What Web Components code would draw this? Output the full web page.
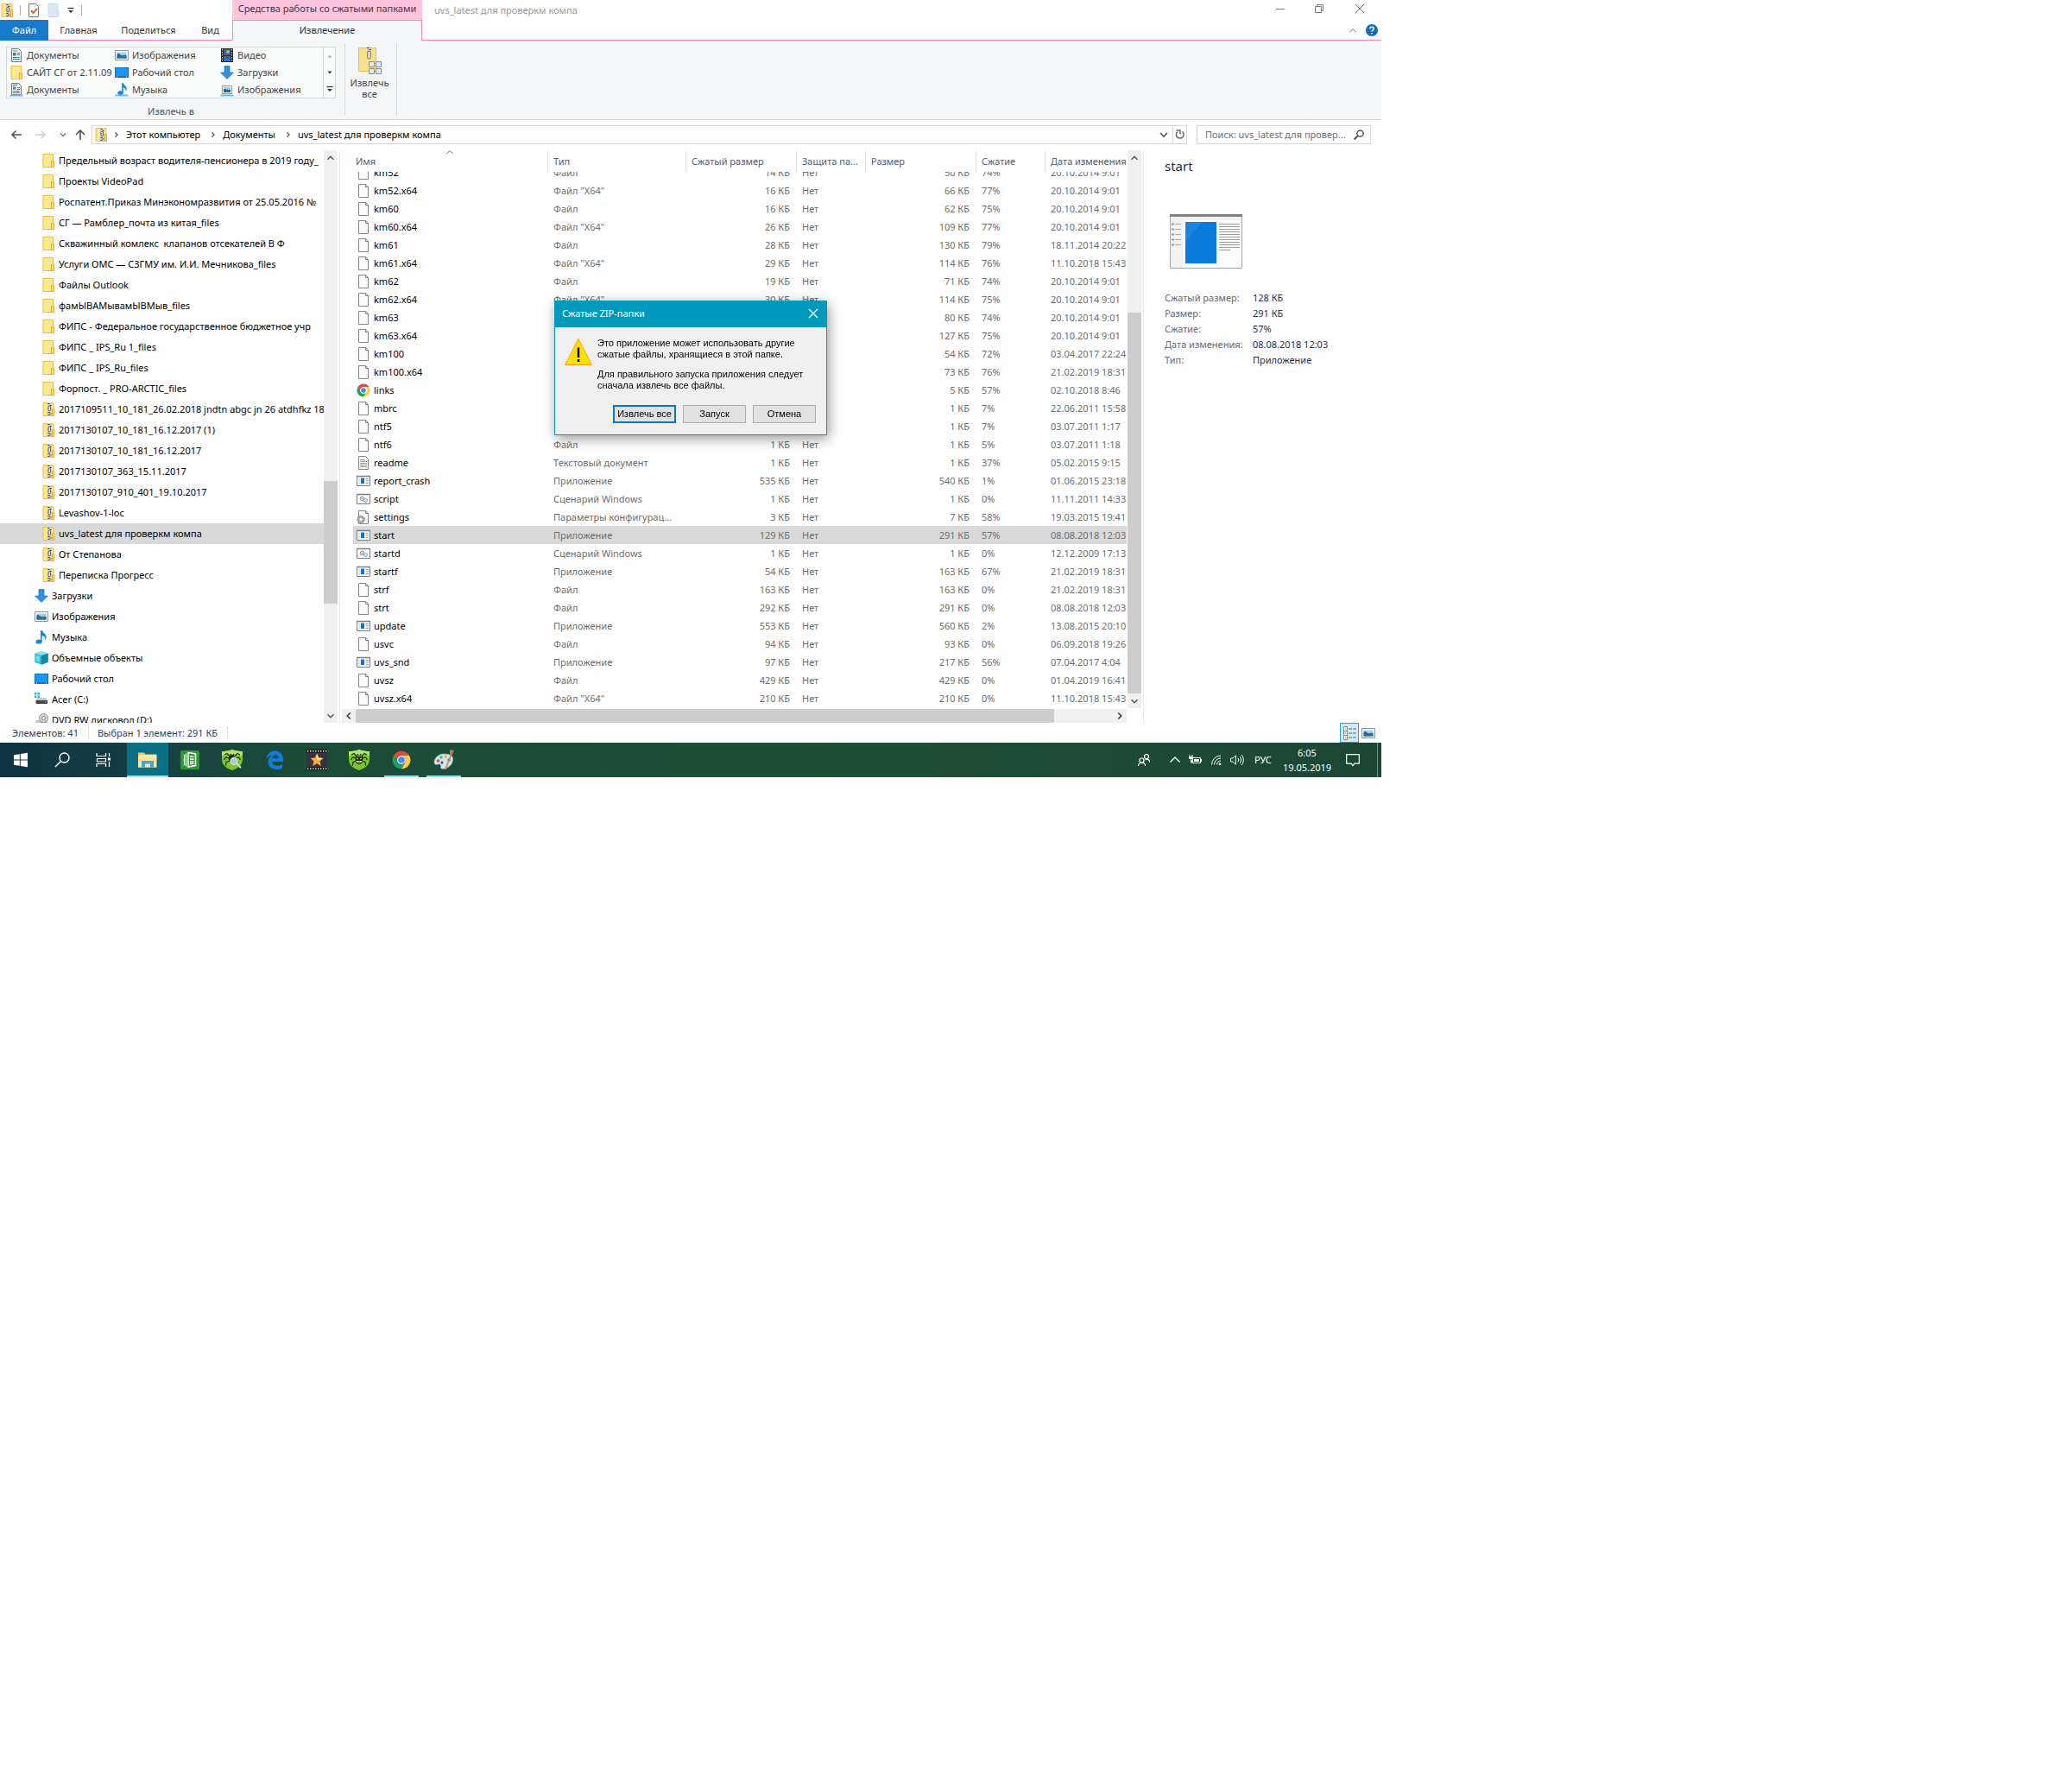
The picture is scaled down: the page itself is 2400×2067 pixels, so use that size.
<!DOCTYPE html>
<html lang="ru">
<head>
<meta charset="utf-8">
<title>uvs_latest для проверкм компа</title>
<style>
  body { margin: 0; background: #fff; display: grid; grid-template-columns: 2fr 1fr; align-items: start;
    font: 11px/16px "Noto Sans", "Open Sans", sans-serif; color: #000; }
</style>
</head>
<body>
<desk-top></desk-top>
<script>
const ICONS = {
  folder: ['0 0 16 16', '<path d="M2 .5h11.500v15H2z" fill="#ffe68f" stroke="#e9c04c"/><path d="M11.500 8.500h3v7h-3z" fill="#ffd75e" stroke="#e0b23a"/>'],
  zip: ['0 0 16 16', '<path d="M2 .5h12v15H2z" fill="#ffe68f" stroke="#e9c04c"/><path d="M12.500 7.500h2v8h-2z" fill="#ffd75e" stroke="#e0b23a"/><path d="M7 0h4.500v16H7z" fill="#c9c9c9"/><path d="M7.500 1.500h2m0 2h2m-4 8h2m0 1.500h2m-4 1.500h2" stroke="#444" stroke-width="1.200"/><rect x="8" y="4.500" width="2.500" height="5" rx="1" fill="#eee" stroke="#555"/>'],
  file: ['0 0 16 16', '<path d="M2.500.5h8l3 3v12h-11z" fill="#fbfbfb" stroke="#858585"/><path d="M10.500.5v3h3" fill="none" stroke="#858585"/>'],
  text: ['0 0 16 16', '<path d="M2.500.5h8l3 3v12h-11z" fill="#fdfdfd" stroke="#858585"/><path d="M4 4.500h6M4 6.500h8M4 8.500h8M4 10.500h8M4 12.500h8" stroke="#999"/>'],
  chrome: ['0 0 16 16', '<path d="M1.500 4.250A7.500 7.500 0 0 1 14.500 4.250H8A3.750 3.750 0 0 0 4.750 9.900z" fill="#dd4b3e"/><path d="M14.500 4.250A7.500 7.500 0 0 1 8 15.500l3.250-5.600A3.750 3.750 0 0 0 8 4.250z" fill="#ffcd42"/><path d="M8 15.500A7.500 7.500 0 0 1 1.500 4.250l3.250 5.650a3.750 3.750 0 0 0 6.500 0z" fill="#1aa15f"/><circle cx="8" cy="8" r="3.600" fill="#fff"/><circle cx="8" cy="8" r="2.800" fill="#4587f3"/>'],
  exe: ['0 0 16 16', '<path d="M.5 2.500h15v11H.5z" fill="#fff" stroke="#7b7f83"/><path d="M0 2.500h16" stroke="#7b7f83" stroke-width="1.500"/><path d="M2 4h2v8H2z" fill="#e4e4e4"/><path d="M5 4.500h4v6.500H5z" fill="#0a74d8"/><path d="M10.500 5.500H14m-3.500 2.500H14m-3.500 2.500H14" stroke="#999"/>'],
  script: ['0 0 16 16', '<path d="M.5 2.500h15v11H.5z" fill="#fff" stroke="#7b7f83"/><path d="M0 2.500h16" stroke="#7b7f83" stroke-width="1.500"/><circle cx="6.500" cy="7.500" r="2.300" fill="#eee" stroke="#888"/><circle cx="6.500" cy="7.500" r=".8" fill="#888"/><circle cx="10.500" cy="9.500" r="2" fill="#dceeff" stroke="#7aa6c8"/>'],
  settings: ['0 0 16 16', '<path d="M2.500.5h8l3 3v12h-11z" fill="#fbfbfb" stroke="#858585"/><path d="M10.500.5v3h3" fill="none" stroke="#858585"/><circle cx="5" cy="10.500" r="4" fill="#bbb" stroke="#888" stroke-width="1.500" stroke-dasharray="1.600 1.200"/><circle cx="5" cy="10.500" r="3" fill="#c8c8c8" stroke="#777" stroke-width=".6"/><circle cx="5" cy="10.500" r="1.200" fill="#fff"/>'],
  download: ['0 0 16 16', '<path d="M5 .5h6V8h4.500L8 15.500.5 8H5z" fill="#3390df" stroke="#1f76c2" stroke-width=".7"/>'],
  picture: ['0 0 16 16', '<path d="M.5 2.500h15v11H.5z" fill="#fff" stroke="#8d9694"/><path d="M2.500 4.500h11v7h-11z" fill="#9cd0f5"/><path d="M2.500 6.500c2-1 3 0 4.500 1.500 2 .5 4-.5 6.500 0v3.500h-11z" fill="#2f6682"/><path d="M2.500 10c4-1 7-1 11 0v1.500h-11z" fill="#1d79bd"/>'],
  pictureLib: ['0 0 16 16', '<path d="M2.500 3.500h11v9h-11z" fill="#fff" stroke="#8d9694"/><path d="M4 5h8v6H4z" fill="#9cd0f5"/><path d="M4 7.500c3-1.500 4 1 8 .5v3H4z" fill="#2f6682"/><path d="M1 13.500h14l1 2H0z" fill="#6db8ea"/>'],
  music: ['0 0 16 16', '<ellipse cx="5" cy="13" rx="3.600" ry="2.600" fill="#1487e0"/><path d="M7 0h2c.5 3 4.500 3.500 4.500 7.500 0 1.500-.5 2.500-1.500 3.500.5-3-1-4.500-3.400-5V13H7z" fill="#1487e0"/>'],
  musicLib: ['0 0 16 16', '<path d="M1 13.500h14l1 2H0z" fill="#6db8ea"/><ellipse cx="6.500" cy="11.500" rx="3.200" ry="2.300" fill="#1487e0"/><path d="M8.200 0h1.600c.5 3 4 3.500 4 7 0 1-.4 2-1.200 2.700.3-2.500-.8-3.700-2.800-4.200v6H8.200z" fill="#1487e0"/>'],
  cube: ['0 0 16 16', '<path d="M8 .3l7.700 2.400v10L8 15.700.3 12.700v-10z" fill="#2fb4cc"/><path d="M8 .3l7.700 2.400L8 5 .3 2.700z" fill="#8be3ef"/><path d="M8 5v10.700l7.700-3v-10z" fill="#1487a5"/><path d="M1.500 4.500L6 6v7l-4.500-1.500z" fill="#74d5e4"/>'],
  desktop: ['0 0 16 16', '<path d="M0 2h16v12H0z" fill="#0d6fc9"/><path d="M1 3h14v9H1z" fill="#1796f2"/><path d="M2 13h1m10 0h1" stroke="#fff"/>'],
  drive: ['0 0 16 16', '<path d="M0 0h2.500v2.500H0zM3.500 0H6v2.500H3.500zM0 3.500h2.500V6H0zM3.500 3.500H6V6H3.500z" fill="#23b2e8"/><path d="M3 6h10l2 3H1.500z" fill="#c5c9cb"/><path d="M1.500 9H15v4H1.500z" fill="#45494c"/><path d="M12 11h1.500" stroke="#59e04f"/>'],
  dvd: ['0 0 16 16', '<path d="M2 8h12l1.500 4H.5z" fill="#bfc3c5"/><circle cx="10.500" cy="5.500" r="5" fill="#d8d8d8" stroke="#8c8c8c"/><circle cx="10.500" cy="5.500" r="2" fill="#fff" stroke="#777"/><path d="M.5 12h15v3H.5z" fill="#777"/>'],
  docs: ['0 0 16 16', '<path d="M2.500.5h8l3 3v12h-11z" fill="#fff" stroke="#777"/><path d="M4 5h3.500v3.500H4z" fill="#2f7fc4"/><path d="M4 3h5M9 5.500h3M9 7.500h3M4 10.500h8M4 12.500h8" stroke="#2f7fc4"/>'],
  docsLib: ['0 0 16 16', '<path d="M2.500.5h8l3 3v10h-11z" fill="#fff" stroke="#777"/><path d="M4 4.500h3.500v3H4z" fill="#2f7fc4"/><path d="M4 2.500h5M9 5.500h3M9 7.500h3M4 9.500h8M4 11.500h8" stroke="#2f7fc4"/><path d="M1 13.500h14l1 2H0z" fill="#6db8ea"/>'],
  video: ['0 0 16 16', '<path d="M1 0h14v16H1z" fill="#222"/><path d="M4 1h8v7H4z" fill="#2465b5"/><path d="M4 9h8v6H4z" fill="#2f73c9"/><circle cx="9" cy="4" r="2" fill="#e0a92d"/><path d="M5 13l3-3 3 3" stroke="#2b3f55" fill="none"/><path d="M2.500 1v15M13.500 1v15" stroke="#eee" stroke-dasharray="1.500 1.500"/>'],
  check: ['0 0 16 16', '<path d="M2.500.5h8l3 3v12h-11z" fill="#fff" stroke="#777"/><path d="M5 8l2.500 3L12 6" fill="none" stroke="#e8622b" stroke-width="2"/>'],
  ghost: ['0 0 16 16', '<path d="M2 .5h11v15H2z" fill="#dce8f5" stroke="#ccd9ea"/><path d="M11.500 8.500h3v7h-3z" fill="#d2e2f4"/>'],
  extract: ['0 0 30 32', '<path d="M2.500 1.500h20v27h-20z" fill="#fbe08b" stroke="#e5bd52"/><path d="M12 0h5v15h-5z" fill="#ccc"/><path d="M12 1.500h2.500m0 2H17" stroke="#555"/><rect x="12.800" y="5" width="3.400" height="9" rx="1.700" fill="#eee" stroke="#666"/><g fill="#d5ecfa" stroke="#4b9fd5"><path d="M14.500 17.500h6v6h-6zM22.500 17.500h6v6h-6zM14.500 25.500h6v6h-6zM22.500 25.500h6v6h-6z"/></g>'],
  back: ['0 0 16 16', '<path d="M14 8H3m4.500-4.500L3 8l4.500 4.500" fill="none" stroke="#555" stroke-width="1.600"/>'],
  forward: ['0 0 16 16', '<path d="M2 8h11M8.500 3.500L13 8l-4.500 4.500" fill="none" stroke="#ccc" stroke-width="1.400"/>'],
  up: ['0 0 16 16', '<path d="M8 14V3M3 8l5-5 5 5" fill="none" stroke="#555" stroke-width="1.700"/>'],
  chevDown: ['0 0 16 16', '<path d="M4 6l4 4 4-4" fill="none" stroke="#555" stroke-width="1.700"/>'],
  chevUp: ['0 0 16 16', '<path d="M4 10l4-4 4 4" fill="none" stroke="#555" stroke-width="1.700"/>'],
  chevLeft: ['0 0 16 16', '<path d="M10 4L6 8l4 4" fill="none" stroke="#444" stroke-width="2"/>'],
  chevRight: ['0 0 16 16', '<path d="M6 4l4 4-4 4" fill="none" stroke="#444" stroke-width="2"/>'],
  thinUp: ['0 0 16 16', '<path d="M4.500 10L8 6.500l3.500 3.500" fill="none" stroke="#666"/>'],
  crumb: ['0 0 16 16', '<path d="M6.500 5.500L9 8l-2.500 2.500" fill="none" stroke="#555" stroke-width="1.300"/>'],
  refresh: ['0 0 16 16', '<path d="M6 4.500a4.300 4.300 0 1 0 5.500 0" fill="none" stroke="#666" stroke-width="1.500"/><path d="M4.500 3H9v4.500" fill="none" stroke="#666" stroke-width="1.500"/>'],
  search: ['0 0 16 16', '<circle cx="9.500" cy="6.500" r="3.600" fill="none" stroke="#555" stroke-width="1.500"/><path d="M7 9l-4.500 4.500" stroke="#555" stroke-width="2"/>'],
  min: ['0 0 16 16', '<path d="M3 8.500h10" stroke="#777"/>'],
  restore: ['0 0 16 16', '<path d="M3.500 5.500h7v7h-7zM5.500 5.500v-2h7v7h-2" fill="none" stroke="#777"/>'],
  close: ['0 0 16 16', '<path d="M3 3l10 10M13 3L3 13" stroke="#777"/>'],
  closeWhite: ['0 0 16 16', '<path d="M3 3l10 10M13 3L3 13" stroke="#fff" stroke-width="1.200"/>'],
  help: ['0 0 16 16', '<circle cx="8" cy="8" r="7" fill="#0f6cbf"/><path d="M5.800 6.300C5.800 3.500 10.300 3.500 10.300 6.200 10.300 8 8 7.800 8 9.700M8 11v1.500" fill="none" stroke="#fff" stroke-width="1.500"/>'],
  triDown: ['0 0 16 16', '<path d="M5.500 6.500h5L8 9.500z" fill="#333"/>'],
  triUp: ['0 0 16 16', '<path d="M5.500 9.500h5L8 6.500z" fill="#aaa"/>'],
  triBar: ['0 0 16 16', '<path d="M4.500 5.500h7" stroke="#333" stroke-width="1.300"/><path d="M5 8h6l-3 3z" fill="#333"/>'],
  warning: ['0 0 32 32', '<path d="M16 1L31.500 31.500H.5z" fill="#ffdf00" stroke="#f2a52a"/><path d="M16 11.500V23M16 25v3" stroke="#000" stroke-width="2.400"/>'],
  details: ['0 0 16 16', '<path d="M1.500.5h4v15h-4zM1.500 5.500h4M1.500 10.500h4" fill="#fff" stroke="#888"/><path d="M3 3h1" stroke="#2a9"/><path d="M3 8h1" stroke="#27f"/><path d="M3 13h1" stroke="#d22"/><path d="M7 3h4m1 0h4M7 8h4m1 0h4M7 13h4m1 0h4" stroke="#666"/>'],
  preview: ['0 0 84 63', '<path d="M.5.500h83v62H.5z" fill="#fdfdfd" stroke="#a5a8a6"/><path d="M0 0h84v3H0z" fill="#7c827e"/><path d="M1 3h82v4H1z" fill="#f0f0f0"/><path d="M1 7h14v55H1z" fill="#f1f1f1"/><path d="M18 9h36v48H18z" fill="#0a7adb"/><path d="M18 9h20L18 32z" fill="#1c83df"/><path d="M57 11.500h24M57 14.500h24M57 17.500h24M57 20.500h24M57 23.500h24M57 26.500h24M57 29.500h24M57 32.500h24M57 35.500h24M57 38.500h24M57 41.500h13" stroke="#999"/><path d="M6 11.500h7M6 17.500h7M6 23.500h7M6 29.500h7M6 35.500h7" stroke="#aaa"/><path d="M2 11.500h3M2 17.500h3M2 23.500h3M2 29.500h3M2 35.500h3" stroke="#999" stroke-width="2"/>'],
  win: ['0 0 24 24', '<path d="M4 6.200l6.800-1v6.300H4zM11.800 5L20 3.800v7.700h-8.200zM4 12.500h6.800v6.300L4 17.800zM11.800 12.500H20v7.700L11.800 19z" fill="#fff"/>'],
  tbSearch: ['0 0 24 24', '<circle cx="14.500" cy="9.500" r="5.500" fill="none" stroke="#fff" stroke-width="1.400"/><path d="M10.500 13.500L4 20" stroke="#fff" stroke-width="1.400"/>'],
  taskview: ['0 0 24 24', '<path d="M4 4v3.500h10.500V4M4 20v-3.500h10.500V20M4.500 10.500h10v3.500h-10z" fill="none" stroke="#fff" stroke-width="1.200"/><path d="M18.500 4v4m0 6v6" stroke="#fff" stroke-width="1.200"/><path d="M17 9.500h3v3h-3z" fill="#fff"/>'],
  explorer: ['0 0 24 24', '<path d="M1 3.500h7l1.500 2H22v15H1z" fill="#f3c65a"/><path d="M2 6h20.500v14.500H1V9z" fill="#ffe6a0"/><path d="M5 20.500V13h14v7.500h-4v-4H9v4z" fill="#3aa7e0"/>'],
  evernote: ['0 0 24 24', '<rect x="1" y="1" width="22" height="22" rx="2" fill="#2f9634"/><path d="M10 3.500L18.500 5v13.500L10 20z" fill="none" stroke="#fff" stroke-width="1.500"/><path d="M7.500 4.500v15M5.500 6v12" stroke="#fff" stroke-width="1.300"/><path d="M12 8l4.500.5M12 11l4.500.2M12 14h4.500M12 16.500l4.500-.3" stroke="#fff" stroke-width="1.400"/>'],
  drweb: ['0 0 24 24', '<path d="M0 2c4 0 8-.5 12-2 4 1.500 8 2 12 2v9c0 7-5 10.500-12 13C5 21.500 0 18 0 11z" fill="#7cc62d"/><path d="M0 2c4 0 8-.5 12-2 4 1.500 8 2 12 2v5C16 5 8 5 0 7z" fill="#b5e567"/><path d="M9 7.500L6 4.500 3 6m6 4L4.500 9 2.500 12m6.500 1l-4 1.500-.5 4M15 7.500l3-3L21 6m-6 4l4.500-1 2 3M15 13l4 1.500.5 4M10 5l1 2m3-2l-1 2" fill="none" stroke="#1c2a12" stroke-width="1.200"/><path d="M8 7c2 1.500 6 1.500 8 0 .8 2 .8 7-1 9-1.500 1.500-4.500 1.500-6 0-1.800-2-1.800-7-1-9z" fill="#1c2a12"/><path d="M9 10l2 1m4-1l-2 1m-4 2.500c1.500 2.500 4.500 2.500 6 0z" stroke="#b5e567" stroke-width="1.200" fill="none"/>'],
  drwebScan: ['0 0 24 24', '<path d="M0 2c4 0 8-.5 12-2 4 1.500 8 2 12 2v9c0 7-5 10.500-12 13C5 21.500 0 18 0 11z" fill="#7cc62d"/><path d="M0 2c4 0 8-.5 12-2 4 1.500 8 2 12 2v5C16 5 8 5 0 7z" fill="#b5e567"/><path d="M9 7.500L6 4.500 3 6m6 4L4.500 9 2.500 12m6.500 1l-4 1.500-.5 4M15 7.500l3-3L21 6m-6 4l4.500-1 2 3M10 5l1 2m3-2l-1 2" fill="none" stroke="#1c2a12" stroke-width="1.200"/><ellipse cx="11.500" cy="10.500" rx="3.800" ry="4.500" fill="#1c2a12"/><path d="M17 16l5 5" stroke="#ddd" stroke-width="2"/><circle cx="14" cy="13.500" r="4" fill="#a9cbd9" stroke="#ddd" stroke-width="1.300"/>'],
  edge: ['0 0 24 24', '<path d="M2 11C3.500 4.500 8 1.500 12.500 1.500 18.500 1.500 22 6 22 11.500V14H9c.3 3.300 3.300 4.800 6.300 4.800 2.200 0 4.200-.6 5.700-1.500v4.200c-2 1-4.300 1.500-6.500 1.500C8 23 4.500 19 4.500 14.500c0-3.200 1.700-5.900 4.500-7.500C5.800 7.300 3.400 8.700 2 11zM9.200 10.200h7.300c0-2.500-1.300-3.900-3.500-3.900S9.500 7.800 9.200 10.200z" fill="#0f7ddb"/>'],
  star: ['0 0 24 24', '<path d="M0 0h24v24H0z" fill="#111"/><path d="M0 3.500h24v17H0z" fill="#343443"/><path d="M1 1.700h23M1 22.300h23" stroke="#eee" stroke-width="1.400" stroke-dasharray="1.500 1.500"/><path d="M12 4.500l2.200 5 5.300.5-4 3.600 1.200 5.300-4.700-2.800-4.700 2.800 1.200-5.300-4-3.600 5.300-.5z" fill="#ffad3a"/><path d="M12 4.500l2.200 5 5.300.5-7.500 3z" fill="#ffe1a1"/>'],
  paint: ['0 0 24 24', '<path d="M13 5C6 4.500 1 10 1 14.500c0 3 2.500 3.500 4.500 2.500s3.500.5 3 3 2 3 5 2c6-2 9-6 9-11S18 5.300 13 5z" fill="#cfe6f2" stroke="#89adc0" stroke-width=".6"/><circle cx="5.500" cy="13" r="1.800" fill="#de4c3b"/><circle cx="9" cy="9" r="1.800" fill="#52b84a"/><circle cx="14" cy="8" r="1.800" fill="#f2b632"/><circle cx="18" cy="12" r="1.800" fill="#366fc6"/><circle cx="10" cy="15" r="1.500" fill="#24506b"/><path d="M21.500 3L14 23" stroke="#d28a3c" stroke-width="1.800"/><path d="M19 0l5 1-2 5-3-1z" fill="#b87945"/>'],
  people: ['0 0 16 16', '<circle cx="11" cy="4" r="2.500" fill="none" stroke="#fff" stroke-width="1.200"/><circle cx="5.500" cy="8.500" r="2.500" fill="none" stroke="#fff" stroke-width="1.200"/><path d="M1.500 15c0-5 8-5 8 0M9.500 8c2.500-2 5-.5 5 2.500" fill="none" stroke="#fff" stroke-width="1.200"/>'],
  trayUp: ['0 0 16 16', '<path d="M2.500 10.500L8 5l5.500 5.500" fill="none" stroke="#fff" stroke-width="1.300"/>'],
  battery: ['0 0 16 16', '<path d="M4.500 5.500h9v6h-9zM14.500 7v3" fill="none" stroke="#fff"/><path d="M6 7h6v3H6z" fill="#fff"/><path d="M1 2v2m3-2v2M.5 4.500h4v2h-4zM2.500 6v5h2" fill="#fff" stroke="#fff"/>'],
  wifi: ['0 0 16 16', '<path d="M2.500 13.500a10.500 10.500 0 0 1 10.500-10.500M5.500 13.500a7.500 7.500 0 0 1 7.500-7.500M8.500 13.500a4.500 4.500 0 0 1 4.500-4.500" fill="none" stroke="#fff"/><circle cx="12" cy="12.700" r="1.300" fill="#fff"/>'],
  speaker: ['0 0 16 16', '<path d="M.5 6h2.500l3.500-3v10L3 10H.5z" fill="none" stroke="#fff"/><path d="M9 6c1 1 1 3 0 4m2-6c2 2 2 6 0 8m2-10c3 3 3 9 0 12" fill="none" stroke="#fff"/>'],
  notify: ['0 0 16 16', '<path d="M.7 1.700h14.600v10.500H10L8 14.500l-2-2.300H.7z" fill="none" stroke="#fff" stroke-width="1.200"/>']
};

const BASE = `
  *, *::before { box-sizing: border-box; }
  button, input { font: inherit; color: inherit; background: none; border: 0; padding: 0; margin: 0; }
  button { display: flex; align-items: center; justify-content: center; white-space: nowrap; }
  a { color: inherit; text-decoration: none; }
`;

class Part extends HTMLElement {
  connectedCallback() {
    if (this.shadowRoot) return;
    const t = document.createElement('template');
    t.innerHTML = `<style>${BASE}${this.styles()}</style>${this.markup()}`;
    this.attachShadow({ mode: 'open' }).append(t.content.cloneNode(true));
    this.ready();
  }
  styles() { return ''; }
  markup() { return '<slot></slot>'; }
  ready() {}
}

customElements.define('ui-icon', class extends Part {
  styles() { return `:host { display: block; width: 16px; height: 16px; flex: none; } svg { display: block; width: 100%; height: 100%; }`; }
  markup() {
    const [box, body] = ICONS[this.getAttribute('name')];
    return `<svg viewBox="${box}" aria-hidden="true">${body}</svg>`;
  }
});

customElements.define('scroll-bar', class extends Part {
  styles() { return `
    :host { display: flex; flex-direction: column; background: #f0f0f0; width: 16px; }
    :host([horizontal]) { flex-direction: row; width: auto; height: 16px; }
    button { width: 16px; height: 17px; flex: none; }
    :host([horizontal]) button { width: 16px; height: 16px; }
    .thumb { background: #cdcdcd; }
    ui-icon { width: 14px; height: 14px; }`; }
  markup() {
    const h = this.hasAttribute('horizontal');
    const [a, b, c] = this.getAttribute('parts').split(' ');
    return `<button aria-label="Назад"><ui-icon name="${h ? 'chevLeft' : 'chevUp'}"></ui-icon></button>
      <div style="flex:${a}"></div><div class="thumb" style="flex:${b}"></div><div style="flex:${c}"></div>
      <button aria-label="Вперед"><ui-icon name="${h ? 'chevRight' : 'chevDown'}"></ui-icon></button>`;
  }
});

customElements.define('title-bar', class extends Part {
  styles() { return `
    :host { display: flex; height: 23px; background: #fff; }
    .quick { width: 269px; display: flex; align-items: center; gap: 7px; }
    .quick button:nth-last-child(2) { width: 10px; }
    .sep { width: 1px; height: 12px; background: #aaa; }
    .group { width: 220px; background: #ffc4dd; color: #4a3340; text-align: center; line-height: 20px; white-space: nowrap; }
    .title { flex: 1; padding-left: 14px; color: #999; line-height: 23px; }
    .win { display: flex; }
    .win button { width: 45px; height: 20px; }
    .win button:last-child { width: 50px; }`; }
  markup() { return `
    <div class="quick"><ui-icon name="zip"></ui-icon><span class="sep"></span>
      <button aria-label="Свойства"><ui-icon name="check"></ui-icon></button>
      <button aria-label="Новая папка"><ui-icon name="ghost"></ui-icon></button>
      <button aria-label="Настройка панели"><ui-icon name="triBar"></ui-icon></button><span class="sep"></span>
    </div>
    <div class="group">Средства работы со сжатыми папками</div>
    <div class="title">uvs_latest для проверкм компа</div>
    <div class="win"><button aria-label="Свернуть"><ui-icon name="min"></ui-icon></button>
      <button aria-label="Восстановить"><ui-icon name="restore"></ui-icon></button>
      <button aria-label="Закрыть"><ui-icon name="close"></ui-icon></button></div>`; }
});

customElements.define('tab-strip', class extends Part {
  styles() { return `
    :host { display: flex; height: 24px; color: #333; }
    button, .rest { border-bottom: 1px solid #ff80b4; }
    .file { width: 56px; background: #1979ca; color: #fff; border-color: #1979ca; }
    .home { width: 70px; } .share { width: 92px; } .view { width: 51px; }
    .ctx { width: 220px; background: #f5f6f7; border: 1px solid #ff80b4; border-bottom-color: #f5f6f7; }
    .rest { flex: 1; display: flex; align-items: center; justify-content: flex-end; gap: 6px; padding-right: 3px; }
    .rest button { border: 0; }`; }
  markup() { return `
    <button class="file">Файл</button><button class="home">Главная</button><button class="share">Поделиться</button>
    <button class="view">Вид</button><button class="ctx">Извлечение</button>
    <div class="rest"><button aria-label="Свернуть ленту"><ui-icon name="thinUp"></ui-icon></button>
    <button aria-label="Справка"><ui-icon name="help"></ui-icon></button></div>`; }
});

customElements.define('rib-bon', class extends Part {
  styles() { return `
    :host { display: flex; height: 92px; background: #f5f6f7; border-bottom: 1px solid #d5d8d6; color: #444; padding: 3px 0 4px; }
    .group { width: 400px; border-right: 1px solid #d9dbdc; padding: 4px 10px 0 7px; display: flex; flex-direction: column; gap: 7px; }
    .gallery { display: flex; border: 1px solid #d3d7d5; background: #fafbfb; height: 60px; }
    .items { flex: 1; display: grid; grid-template-columns: 122px 122px 1fr; grid-template-rows: repeat(3, 20px); align-content: center; padding-left: 3px; }
    .items button { justify-content: flex-start; gap: 4px; }
    .arrows { width: 14px; border-left: 1px solid #d3d7d5; display: grid; }
    .arrows button { overflow: hidden; }
    .label { text-align: center; color: #555; }
    .all { width: 60px; border-right: 1px solid #d9dbdc; }
    .all button { flex-direction: column; width: 56px; line-height: 13px; white-space: normal; padding-top: 4px; gap: 3px; }
    .all ui-icon { width: 30px; height: 32px; }`; }
  markup() {
    const items = [['docs', 'Документы'], ['picture', 'Изображения'], ['video', 'Видео'], ['folder', 'САЙТ СГ от 2.11.09'], ['desktop', 'Рабочий стол'], ['download', 'Загрузки'], ['docsLib', 'Документы'], ['musicLib', 'Музыка'], ['pictureLib', 'Изображения']];
    return `<div class="group"><div class="gallery"><div class="items">${items.map(([i, t]) => `<button><ui-icon name="${i}"></ui-icon>${t}</button>`).join('')}</div>
      <div class="arrows"><button aria-label="Вверх"><ui-icon name="triUp"></ui-icon></button><button aria-label="Вниз"><ui-icon name="triDown"></ui-icon></button><button aria-label="Еще"><ui-icon name="triBar"></ui-icon></button></div></div>
      <div class="label">Извлечь в</div></div>
      <div class="all"><button><ui-icon name="extract"></ui-icon><span>Извлечь<br>все</span></button></div>`;
  }
});

customElements.define('address-bar', class extends Part {
  styles() { return `
    :host { box-sizing: border-box; display: flex; align-items: center; height: 35px; padding: 0 12px 2px 11px; }
    nav { display: flex; width: 95px; }
    nav button { width: 28px; justify-content: flex-start; }
    nav button:nth-child(3) { width: 14px; opacity: .8; }
    nav button:nth-child(3) ui-icon { width: 12px; height: 12px; }
    nav button:nth-child(4) { width: 20px; justify-content: flex-end; }
    .path { flex: 1; display: flex; align-items: center; height: 22px; border: 1px solid #d3d7d5; padding-left: 2px; }
    .path a { white-space: nowrap; padding: 0 7px 0 3px; }
    .path ui-icon:first-child { margin-right: 2px; }
    .gap { flex: 1; }
    .path button:last-child { width: 16px; border-left: 1px solid #d3d7d5; height: 20px; }
    .find { width: 202px; height: 22px; margin-left: 11px; border: 1px solid #d3d7d5; display: flex; align-items: center; padding: 0 5px 0 9px; }
    input { flex: 1; min-width: 0; outline: 0; }
    input::placeholder { color: #6d6d6d; opacity: 1; }`; }
  markup() { return `
    <nav><button aria-label="Назад"><ui-icon name="back"></ui-icon></button><button aria-label="Вперед"><ui-icon name="forward"></ui-icon></button>
      <button aria-label="Последние"><ui-icon name="chevDown"></ui-icon></button><button aria-label="Вверх"><ui-icon name="up"></ui-icon></button></nav>
    <div class="path"><ui-icon name="zip"></ui-icon><ui-icon name="crumb"></ui-icon><a href="#">Этот компьютер</a><ui-icon name="crumb"></ui-icon><a href="#">Документы</a><ui-icon name="crumb"></ui-icon><a href="#">uvs_latest для проверкм компа</a>
      <span class="gap"></span><button aria-label="Журнал"><ui-icon name="chevDown"></ui-icon></button><button aria-label="Обновить"><ui-icon name="refresh"></ui-icon></button></div>
    <label class="find"><input type="text" aria-label="Поиск" placeholder="Поиск: uvs_latest для провер..."><ui-icon name="search"></ui-icon></label>`; }
});

const TREE = [
  ['folder', 'Предельный возраст водителя-пенсионера в 2019 году_'], ['folder', 'Проекты VideoPad'],
  ['folder', 'Роспатент.Приказ Минэкономразвития от 25.05.2016 №'], ['folder', 'СГ — Рамблер_почта из китая_files'],
  ['folder', 'Скважинный комлекс  клапанов отсекателей В Ф'], ['folder', 'Услуги ОМС — СЗГМУ им. И.И. Мечникова_files'],
  ['folder', 'Файлы Outlook'], ['folder', 'фамЫВАМывамЫВМыв_files'], ['folder', 'ФИПС - Федеральное государственное бюджетное учр'],
  ['folder', 'ФИПС _ IPS_Ru 1_files'], ['folder', 'ФИПС _ IPS_Ru_files'], ['folder', 'Форпост. _ PRO-ARCTIC_files'],
  ['zip', '2017109511_10_181_26.02.2018 jndtn abgc jn 26 atdhfkz 18'], ['zip', '2017130107_10_181_16.12.2017 (1)'],
  ['zip', '2017130107_10_181_16.12.2017'], ['zip', '2017130107_363_15.11.2017'], ['zip', '2017130107_910_401_19.10.2017'],
  ['zip', 'Levashov-1-loc'], ['zip', 'uvs_latest для проверкм компа', 'on'], ['zip', 'От Степанова'], ['zip', 'Переписка Прогресс'],
  ['download', 'Загрузки', 'top'], ['picture', 'Изображения', 'top'], ['music', 'Музыка', 'top'], ['cube', 'Объемные объекты', 'top'],
  ['desktop', 'Рабочий стол', 'top'], ['drive', 'Acer (C:)', 'top'], ['dvd', 'DVD RW дисковод (D:)', 'top']];

customElements.define('folder-tree', class extends Part {
  styles() { return `
    :host { box-sizing: border-box; display: flex; width: 394px; border-right: 1px dotted #d8d8d8; overflow: hidden; }
    ul { flex: 1; min-width: 0; margin: 0; padding: 0; list-style: none; overflow: hidden; }
    a { display: flex; align-items: center; gap: 4px; height: 24px; padding-left: 48px; white-space: pre; }
    .top { padding-left: 40px; }
    .on { background: #d9d9d9; }
    scroll-bar { margin-right: 2px; }`; }
  markup() { return `<ul>${TREE.map(([i, t, c]) => `<li><a href="#" class="${c || ''}"><ui-icon name="${i}"></ui-icon>${t}</a></li>`).join('')}</ul><scroll-bar parts="366 142 121"></scroll-bar>`; }
});

const X = 'Файл "X64"', F = 'Файл', A = 'Приложение';
/* icon, name, type, packed size, protection, size, ratio, modified */
const FILES = [
  ['file', 'km52', F, 14, 'Нет', 50, 74, '20.10.2014 9:01'],
  ['file', 'km52.x64', X, 16, 'Нет', 66, 77, '20.10.2014 9:01'],
  ['file', 'km60', F, 16, 'Нет', 62, 75, '20.10.2014 9:01'],
  ['file', 'km60.x64', X, 26, 'Нет', 109, 77, '20.10.2014 9:01'],
  ['file', 'km61', F, 28, 'Нет', 130, 79, '18.11.2014 20:22'],
  ['file', 'km61.x64', X, 29, 'Нет', 114, 76, '11.10.2018 15:43'],
  ['file', 'km62', F, 19, 'Нет', 71, 74, '20.10.2014 9:01'],
  ['file', 'km62.x64', X, 30, 'Нет', 114, 75, '20.10.2014 9:01'],
  ['file', 'km63', '', '', '', 80, 74, '20.10.2014 9:01'],
  ['file', 'km63.x64', '', '', '', 127, 75, '20.10.2014 9:01'],
  ['file', 'km100', '', '', '', 54, 72, '03.04.2017 22:24'],
  ['file', 'km100.x64', '', '', '', 73, 76, '21.02.2019 18:31'],
  ['chrome', 'links', '', '', '', 5, 57, '02.10.2018 8:46'],
  ['file', 'mbrc', '', '', '', 1, 7, '22.06.2011 15:58'],
  ['file', 'ntf5', '', '', '', 1, 7, '03.07.2011 1:17'],
  ['file', 'ntf6', F, 1, 'Нет', 1, 5, '03.07.2011 1:18'],
  ['text', 'readme', 'Текстовый документ', 1, 'Нет', 1, 37, '05.02.2015 9:15'],
  ['exe', 'report_crash', A, 535, 'Нет', 540, 1, '01.06.2015 23:18'],
  ['script', 'script', 'Сценарий Windows', 1, 'Нет', 1, 0, '11.11.2011 14:33'],
  ['settings', 'settings', 'Параметры конфигурац...', 3, 'Нет', 7, 58, '19.03.2015 19:41'],
  ['exe', 'start', A, 129, 'Нет', 291, 57, '08.08.2018 12:03'],
  ['script', 'startd', 'Сценарий Windows', 1, 'Нет', 1, 0, '12.12.2009 17:13'],
  ['exe', 'startf', A, 54, 'Нет', 163, 67, '21.02.2019 18:31'],
  ['file', 'strf', F, 163, 'Нет', 163, 0, '21.02.2019 18:31'],
  ['file', 'strt', F, 292, 'Нет', 291, 0, '08.08.2018 12:03'],
  ['exe', 'update', A, 553, 'Нет', 560, 2, '13.08.2015 20:10'],
  ['file', 'usvc', F, 94, 'Нет', 93, 0, '06.09.2018 19:26'],
  ['exe', 'uvs_snd', A, 97, 'Нет', 217, 56, '07.04.2017 4:04'],
  ['file', 'uvsz', F, 429, 'Нет', 429, 0, '01.04.2019 16:41'],
  ['file', 'uvsz.x64', X, 210, 'Нет', 210, 0, '11.10.2018 15:43']];

customElements.define('file-list', class extends Part {
  styles() { return `
    :host { box-sizing: border-box; flex: 1; min-width: 0; display: grid; grid-template-columns: 1fr 16px; grid-template-rows: 1fr 16px; gap: 1px; padding: 0 2px 0 2px; border-right: 1px dotted #d8d8d8; }
    .view { margin-left: 13px; overflow: hidden; height: 646px; padding-bottom: 4px; }
    table { width: 100%; table-layout: fixed; border-collapse: separate; border-spacing: 0; }
    th { position: sticky; top: 0; z-index: 1; background: #fff; height: 25px; padding: 0 0 0 6px; text-align: left; font-weight: 400; color: #4c607a; border-left: 1px dotted #ccc; white-space: nowrap; overflow: hidden; }
    th:first-child { border: 0; padding-left: 3px; overflow: visible; }
    th div { display: flex; justify-content: space-between; align-items: center; }
    .sort { width: 14px; height: 25px; margin-right: 107px; display: flex; align-items: flex-start; overflow: hidden; }
    .sort ui-icon { margin-top: -6px; }
    td { height: 21px; padding: 0 0 0 7px; color: #6d6d6d; white-space: nowrap; overflow: hidden; line-height: 20px; }
    td:first-child { padding-left: 4px; color: #000; }
    td > span { display: flex; align-items: center; gap: 4px; }
    td.num { text-align: right; padding-right: 7px; }
    tr.on td { background: #d9d9d9; }`; }
  markup() {
    const kb = v => v === '' ? '' : v + ' КБ';
    return `<div class="view"><table>
      <colgroup><col style="width:225px"><col style="width:160px"><col style="width:128px"><col style="width:80px"><col style="width:128px"><col style="width:80px"><col></colgroup>
      <thead><tr><th><div>Имя<span class="sort"><ui-icon name="thinUp"></ui-icon></span></div></th><th>Тип</th><th>Сжатый размер</th><th>Защита па...</th><th>Размер</th><th>Сжатие</th><th>Дата изменения</th></tr></thead>
      <tbody>${FILES.map(r => `<tr class="${r[1] === 'start' ? 'on' : ''}"><td><span><ui-icon name="${r[0]}"></ui-icon>${r[1]}</span></td><td>${r[2]}</td><td class="num">${kb(r[3])}</td><td>${r[4]}</td><td class="num">${kb(r[5])}</td><td>${r[6]}%</td><td>${r[7]}</td></tr>`).join('')}</tbody>
    </table></div><scroll-bar parts="171 441 0"></scroll-bar><scroll-bar horizontal parts="0 810 68"></scroll-bar>`;
  }
  ready() {
    this.shadowRoot.querySelector('.view').scrollTop = 10;
  }
});

customElements.define('detail-pane', class extends Part {
  styles() { return `
    :host { box-sizing: border-box; width: 275px; padding: 8px 0 0 24px; }
    h2 { margin: 0; font-size: 15px; font-weight: 400; line-height: 20px; color: #1e2f50; }
    .thumb { width: 84px; height: 63px; margin: 46px 0 25px 6px; }
    dl { margin: 0; display: grid; grid-template-columns: 102px 1fr; line-height: 18px; white-space: nowrap; color: #1e2f50; }
    dt { color: #62697a; } dd { margin: 0; }`; }
  markup() { return `<h2>start</h2><ui-icon class="thumb" name="preview"></ui-icon>
    <dl><dt>Сжатый размер:</dt><dd>128 КБ</dd><dt>Размер:</dt><dd>291 КБ</dd><dt>Сжатие:</dt><dd>57%</dd><dt>Дата изменения:</dt><dd>08.08.2018 12:03</dd><dt>Тип:</dt><dd>Приложение</dd></dl>`; }
});

customElements.define('status-bar', class extends Part {
  styles() { return `
    :host { display: flex; align-items: center; height: 23px; padding: 0 4px 0 14px; color: #2b4262; }
    span { padding-right: 11px; margin-right: 10px; border-right: 1px dotted #ccc; line-height: 14px; }
    .views { margin-left: auto; display: flex; }
    .views button { width: 22px; height: 23px; }
    .views button:first-child { background: #cfeaf9; border: 1px solid #26a0da; }
    .views ui-icon { height: 16px; }`; }
  markup() { return `<span>Элементов: 41</span><span>Выбран 1 элемент: 291 КБ</span>
    <div class="views"><button aria-label="Таблица"><ui-icon name="details"></ui-icon></button><button aria-label="Крупные значки"><ui-icon name="picture"></ui-icon></button></div>`; }
});

customElements.define('task-bar', class extends Part {
  styles() { return `
    :host { display: flex; height: 40px; color: #fff; background: linear-gradient(90deg, #0d3442, #153f42 10%, #1c4c37 22%, #1f5034 60%, #1b4636); }
    .sys, .apps, .tray { display: flex; }
    .sys button { width: 48px; }
    .apps { margin-left: 3px; gap: 1px; }
    .apps button { width: 48px; border-bottom: 2px solid transparent; border-top: 2px solid transparent; }
    .apps .active { background: #0b7084; border-top-color: #0b7084; border-bottom-color: #90e4f8; }
    .apps .run { margin: 0 4px; width: 40px; border-bottom-color: #90e4f8; }
    .apps ui-icon, .sys ui-icon { width: 24px; height: 24px; }
    .apps .s ui-icon { width: 22px; height: 22px; }
    .tray { margin-left: auto; }
    .tray button { width: 24px; }
    .tray .people { width: 48px; }
    .tray .lang { width: 36px; }
    .tray .clock { width: 66px; line-height: 17px; }
    .tray .note { width: 40px; }
    .tray .show { width: 5px; border-left: 1px solid #6f9180; margin-left: 8px; }`; }
  markup() {
    const apps = [['explorer', 'Проводник', 'active'], ['evernote', 'Заметки', ''], ['drwebScan', 'Сканер', ''], ['edge', 'Edge', ''], ['star', 'Видеоредактор', ''], ['drweb', 'Антивирус', ''], ['chrome', 'Chrome', 'run s'], ['paint', 'Paint', 'run']];
    return `<div class="sys"><button aria-label="Пуск"><ui-icon name="win"></ui-icon></button><button aria-label="Поиск"><ui-icon name="tbSearch"></ui-icon></button><button aria-label="Представление задач"><ui-icon name="taskview"></ui-icon></button></div>
    <div class="apps">${apps.map(([i, t, c]) => `<button class="${c}" aria-label="${t}"><ui-icon name="${i}"></ui-icon></button>`).join('')}</div>
    <div class="tray"><button class="people" aria-label="Люди"><ui-icon name="people"></ui-icon></button><button aria-label="Скрытые значки"><ui-icon name="trayUp"></ui-icon></button><button aria-label="Батарея"><ui-icon name="battery"></ui-icon></button><button aria-label="Сеть"><ui-icon name="wifi"></ui-icon></button><button aria-label="Громкость"><ui-icon name="speaker"></ui-icon></button>
      <button class="lang">РУС</button><button class="clock">6:05<br>19.05.2019</button><button class="note" aria-label="Уведомления"><ui-icon name="notify"></ui-icon></button><button class="show" aria-label="Показать рабочий стол"></button></div>`;
  }
});

customElements.define('zip-dialog', class extends Part {
  styles() { return `
    :host { box-sizing: border-box; display: block; width: 316px; background: #f0f0f0; border: 1px solid #0099bc; box-shadow: 2px 4px 14px rgba(0,0,0,.4); }
    header { display: flex; align-items: center; justify-content: space-between; height: 30px; padding: 0 7px 2px 8px; background: #0099bc; color: #fff; }
    .body { display: flex; gap: 6px; padding: 12px 0 0 11px; font: 11px/13px "Liberation Sans", Arial, sans-serif; }
    .body ui-icon { width: 32px; height: 32px; }
    p { margin: 0 0 10px; white-space: nowrap; }
    footer { display: flex; justify-content: flex-end; gap: 8px; padding: 6px 12px 13px; font: 11px/13px "Liberation Sans", Arial, sans-serif; }
    footer button { width: 73px; height: 21px; background: #e1e1e1; border: 1px solid #adadad; }
    footer button:first-child { border: 2px solid #0078d7; }`; }
  markup() { return `<header>Сжатые ZIP-папки<button aria-label="Закрыть"><ui-icon name="closeWhite"></ui-icon></button></header>
    <div class="body"><ui-icon name="warning"></ui-icon><div><p>Это приложение может использовать другие<br>сжатые файлы, хранящиеся в этой папке.</p><p>Для правильного запуска приложения следует<br>сначала извлечь все файлы.</p></div></div>
    <footer><button>Извлечь все</button><button>Запуск</button><button>Отмена</button></footer>`; }
});

customElements.define('desk-top', class extends Part {
  styles() { return `
    :host { display: block; position: relative; min-width: 0; }
    rib-bon, status-bar, task-bar { box-sizing: border-box; }
    main { display: flex; height: 663px; }
    zip-dialog { position: absolute; left: 50%; top: 348px; transform: translateX(-50%); z-index: 2; }`; }
  markup() { return `<title-bar></title-bar><tab-strip></tab-strip><rib-bon></rib-bon><address-bar></address-bar>
    <main><folder-tree></folder-tree><file-list></file-list><detail-pane></detail-pane></main>
    <status-bar></status-bar><task-bar></task-bar><zip-dialog></zip-dialog>`; }
});
</script>
</body>
</html>
